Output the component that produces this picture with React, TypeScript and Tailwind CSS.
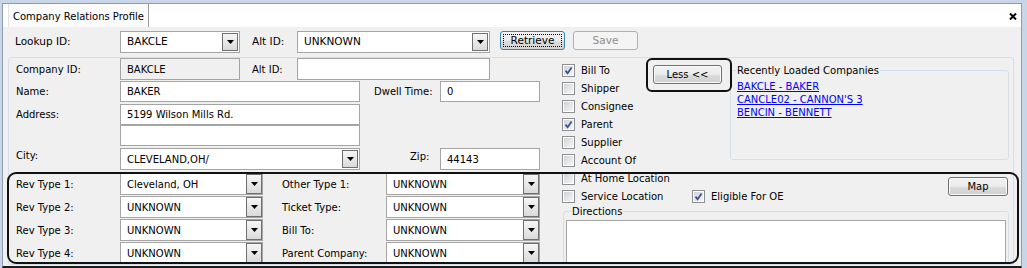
import React from "react";

function Arrow() {
  return (
    <svg width="7" height="4" viewBox="0 0 7 4">
      <path d="M0 0h7L3.5 4z" fill="#000" />
    </svg>
  );
}

function Combo({ value, className, tall }: { value: string; className: string; tall?: boolean }) {
  return (
    <div className={`flex shrink-0 items-center border border-[#a5a5a5] bg-white ${className}`}>
      <span className="flex-1 truncate pl-[6px]">{value}</span>
      <span
        className={`flex w-[16px] shrink-0 items-center justify-center border border-[#6f6f6f] bg-[linear-gradient(#f6f6f6,#dadada)] ${
          tall ? "h-[20px]" : "mr-[1px] h-[18px]"
        }`}
      >
        <Arrow />
      </span>
    </div>
  );
}

function Field({ value, className }: { value?: string; className: string }) {
  return (
    <div className={`flex shrink-0 items-center border border-[#a5a5a5] pl-[6px] ${className}`}>
      {value}
    </div>
  );
}

function Check({ label, checked }: { label: string; checked?: boolean }) {
  return (
    <div className="flex h-[18px] shrink-0 items-center whitespace-nowrap">
      <span className="flex h-[13px] w-[13px] shrink-0 items-center justify-center border border-[#8e8f8f] bg-white p-[1px]">
        <span className="flex h-full w-full items-center justify-center bg-[linear-gradient(135deg,#cfd3d8,#f6f6f6)]">
          {checked ? (
            <svg width="9" height="9" viewBox="0 0 9 9">
              <path d="M1.5 4.6L3.6 7.2L7.6 1.4" fill="none" stroke="#3b5593" strokeWidth="1.8" />
            </svg>
          ) : null}
        </span>
      </span>
      <span className="ml-[6px]">{label}</span>
    </div>
  );
}

const btn =
  "rounded-[3px] border border-[#707070] bg-[linear-gradient(#f2f2f2_0%,#ebebeb_50%,#dddddd_51%,#cfcfcf_100%)] shadow-[inset_0_0_0_1px_#fbfbfb]";

export default function App() {
  const revRows = [
    ["Rev Type 1:", "Cleveland, OH", "Other Type 1:", "UNKNOWN"],
    ["Rev Type 2:", "UNKNOWN", "Ticket Type:", "UNKNOWN"],
    ["Rev Type 3:", "UNKNOWN", "Bill To:", "UNKNOWN"],
    ["Rev Type 4:", "UNKNOWN", "Parent Company:", "UNKNOWN"],
  ];

  return (
    <div className="relative h-[268px] w-[1027px] overflow-hidden bg-[#c8d6e8] font-['DejaVu_Sans',sans-serif] text-[10px] text-black">
      <div className="ml-[2px] mr-[5px] mt-[3px] flex h-[265px] flex-col border-x border-t border-b-2 border-x-[#8d9cb0] border-t-[#8d9cb0] border-b-[#1c1c1c]">
        {/* tab strip */}
        <div className="flex h-[23px] shrink-0 bg-white">
          <div className="ml-[5px] flex w-[141px] items-center border-x border-l-[#e2e2e2] border-r-[#9a9a9a] bg-[#fbfbfb] pl-[4px] pt-[2px]">
            Company Relations Profile
          </div>
          <svg className="ml-auto mr-[4px] mt-[9px]" width="8" height="7" viewBox="0 0 8 7">
            <path d="M1 0.5L7 6.5M7 0.5L1 6.5" stroke="#000" strokeWidth="2" />
          </svg>
        </div>

        <div className="flex min-h-0 flex-1 flex-col bg-[#f0f0f0]">
          {/* lookup row */}
          <div className="mt-[4px] flex h-[22px] shrink-0 items-center pl-[12px] text-[10.5px]">
            <span className="w-[105px]">Lookup ID:</span>
            <Combo value="BAKCLE" className="h-[22px] w-[120px]" />
            <span className="ml-[12px] w-[45px]">Alt ID:</span>
            <Combo value="UNKNOWN" className="h-[22px] w-[193px]" />
            <button className="ml-[10px] h-[19px] w-[65px] self-start rounded-[3px] border border-[#3c7fb1] bg-[linear-gradient(#f2f2f2_0%,#ebebeb_50%,#dddddd_51%,#d3d3d3_100%)] p-[2px] text-[10.5px]">
              <span className="flex h-full w-full items-center justify-center border border-dotted border-black">
                Retrieve
              </span>
            </button>
            <button className="ml-[8px] h-[19px] w-[65px] self-start rounded-[3px] border border-[#adb2b5] bg-[#f4f4f4] text-[10.5px] text-[#8d8d8d]">
              Save
            </button>
          </div>

          {/* main group */}
          <div className="mb-[1px] ml-[5px] mt-[4px] flex min-h-0 w-[1006px] flex-1 overflow-hidden rounded-[3px] border border-[#d5dfe5]">
            <div className="w-[553px] shrink-0 pl-[7px]">
              <div className="flex h-[22px] items-center">
                <span className="w-[104px]">Company ID:</span>
                <Field value="BAKCLE" className="h-[22px] w-[120px] bg-[#f0f0f0]" />
                <span className="ml-[12px] w-[45px]">Alt ID:</span>
                <Field className="h-[22px] w-[193px] bg-white" />
              </div>
              <div className="mt-[1px] flex h-[21px] items-center">
                <span className="w-[104px]">Name:</span>
                <Field value="BAKER" className="h-[21px] w-[240px] bg-white" />
                <span className="ml-[14px] w-[66px]">Dwell Time:</span>
                <Field value="0" className="h-[21px] w-[100px] bg-white" />
              </div>
              <div className="mt-[2px] flex h-[21px] items-center">
                <span className="w-[104px]">Address:</span>
                <Field value="5199 Wilson Mills Rd." className="h-[21px] w-[240px] bg-white" />
              </div>
              <div className="flex h-[21px] items-center">
                <span className="w-[104px]" />
                <Field className="h-[21px] w-[240px] bg-white" />
              </div>
              <div className="mt-[2px] flex h-[22px] items-center">
                <span className="w-[104px] self-start">City:</span>
                <Combo value="CLEVELAND,OH/" className="h-[22px] w-[240px]" />
                <span className="ml-[50px] w-[30px] self-start pt-[1px]">Zip:</span>
                <Field value="44143" className="h-[22px] w-[100px] bg-white" />
              </div>

              {revRows.map((r, i) => (
                <div key={r[0]} className={`flex h-[22px] items-center ${i === 0 ? "mt-[3px]" : "mt-[1px]"}`}>
                  <span className="w-[104px]">{r[0]}</span>
                  <Combo value={r[1]} tall className="h-[22px] w-[143px]" />
                  <span className="ml-[19px] w-[104px]">{r[2]}</span>
                  <Combo value={r[3]} tall className="h-[22px] w-[154px]" />
                </div>
              ))}
            </div>

            <div className="flex w-[447px] shrink-0 flex-col pt-[3px]">
              <div className="flex shrink-0">
                <div className="flex w-[91px] shrink-0 flex-col">
                  <Check label="Bill To" checked />
                  <Check label="Shipper" />
                  <Check label="Consignee" />
                  <Check label="Parent" checked />
                  <Check label="Supplier" />
                  <Check label="Account Of" />
                  <Check label="At Home Location" />
                  <Check label="Service Location" />
                </div>
                <div className="flex flex-1 flex-col">
                  <div className="flex items-start">
                    <button className={`mt-[4px] h-[19px] w-[69px] shrink-0 ${btn}`}>Less &lt;&lt;</button>
                    <fieldset className="ml-[8px] mt-[2px] h-[97px] w-[279px] shrink-0 rounded-[3px] border border-[#d5dfe5]">
                      <legend className="ml-[5px] px-[1px]">Recently Loaded Companies</legend>
                      <div className="flex flex-col pl-[6px] pt-[2px] leading-[13px] text-[#0000ff] underline">
                        <span>BAKCLE - BAKER</span>
                        <span>CANCLE02 - CANNON'S 3</span>
                        <span>BENCIN - BENNETT</span>
                      </div>
                    </fieldset>
                  </div>
                  <div className="mt-[17px] flex h-[28px]">
                    <div className="ml-[39px] self-end">
                      <Check label="Eligible For OE" checked />
                    </div>
                    <button className={`ml-auto mr-[1px] h-[19px] w-[60px] self-start ${btn}`}>Map</button>
                  </div>
                </div>
              </div>
              <fieldset className="-mt-[1px] ml-[1px] h-[62px] w-[446px] shrink-0 rounded-[3px] border border-[#d5dfe5]">
                <legend className="ml-[7px] px-[1px]">Directions</legend>
                <div className="mx-[2px] mt-[1px] h-[44px] border border-[#a5a5a5] bg-white" />
              </fieldset>
            </div>
          </div>
        </div>
      </div>

      {/* annotation outlines */}
      <div className="pointer-events-none absolute left-[646px] top-[58px] h-[34px] w-[86px] rounded-[6px] border-2 border-[#111]" />
      <div className="pointer-events-none absolute left-[7px] top-[172px] h-[92px] w-[1012px] rounded-[9px] border-2 border-[#111]" />
    </div>
  );
}
